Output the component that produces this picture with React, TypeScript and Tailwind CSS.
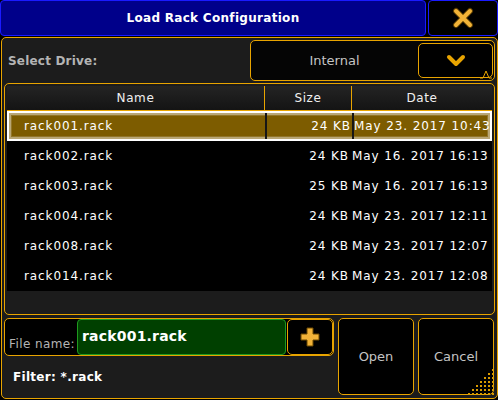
import { Fragment } from 'react';

const files = [
  { name: 'rack001.rack', size: '24 KB', date: 'May 23. 2017 10:43' },
  { name: 'rack002.rack', size: '24 KB', date: 'May 16. 2017 16:13' },
  { name: 'rack003.rack', size: '25 KB', date: 'May 16. 2017 16:13' },
  { name: 'rack004.rack', size: '24 KB', date: 'May 23. 2017 12:11' },
  { name: 'rack008.rack', size: '24 KB', date: 'May 23. 2017 12:07' },
  { name: 'rack014.rack', size: '24 KB', date: 'May 23. 2017 12:08' },
];

const ResizeGrip = () => {
  const dots = [];
  for (let r = 0; r < 7; r++) {
    for (let c = 0; c < 7; c++) {
      if (r + c >= 6) dots.push(<rect key={`${r}-${c}`} x={c * 4} y={r * 4} width="2" height="2" fill="#d99a00" />);
    }
  }
  return (
    <svg width="28" height="28" viewBox="0 0 28 28" className="absolute right-[1px] bottom-[1px]">
      {dots}
    </svg>
  );
};

export default function App() {
  return (
    <div className="w-[498px] h-[400px] bg-black flex flex-col font-['DejaVu_Sans',sans-serif] overflow-hidden">
      {/* Title bar */}
      <div className="flex h-[36px] gap-[2px]">
        <div className="flex-1 bg-[#00008a] border border-[#1a1aff] rounded-[4px] flex items-center justify-center text-white font-bold text-[12px] tracking-[0.3px]">
          Load Rack Configuration
        </div>
        <div className="w-[70px] bg-black border border-[#1a1aff] rounded-[4px] flex items-center justify-center">
          <svg width="22" height="22" viewBox="0 0 22 22">
            <path d="M4 4 L18 18 M18 4 L4 18" stroke="#5a3d00" strokeWidth="6" strokeLinecap="round" />
            <path d="M4 4 L18 18 M18 4 L4 18" stroke="#f2b338" strokeWidth="4" strokeLinecap="round" />
          </svg>
        </div>
      </div>

      {/* Main panel */}
      <div className="relative flex-1 mt-[1px] ml-[1px] mb-[1px] w-[497px] border border-[#e8a400] rounded-[5px] bg-[#1c1c1c] flex flex-col px-[2px] pt-[2px]">
        {/* Drive select */}
        <div className="flex items-center h-[41px]">
          <div className="flex-1 pl-[4px] text-[#b4b4b4] font-bold text-[12px] tracking-[0.2px]">Select Drive:</div>
          <div className="relative w-[245px] h-full border border-[#e8a400] rounded-[5px] bg-[#050505] flex items-center">
            <div className="flex-1 text-center text-[#c4c4c4] text-[13px]">Internal</div>
            <div className="w-[75px] h-[35px] mr-[1px] border border-[#e8a400] rounded-[5px] bg-black flex items-center justify-center">
              <svg width="22" height="14" viewBox="0 0 22 14">
                <path d="M4 3 L11 10 L18 3" fill="none" stroke="#e8a400" strokeWidth="4" strokeLinecap="round" strokeLinejoin="round" />
              </svg>
            </div>
            <svg width="12" height="10" viewBox="0 0 12 10" className="absolute right-[2px] bottom-[1px]">
              <path d="M0 9 L3 9 L6 2 L9 9 L12 9" fill="none" stroke="#e8a400" strokeWidth="1" />
            </svg>
          </div>
        </div>

        {/* File table */}
        <div className="mt-[2px] h-[232px] border border-[#e8a400] rounded-[5px] bg-[#1c1c1c] p-[2px] flex flex-col">
          <div className="grid grid-cols-[258px_87px_1fr] h-[25px] border-b border-[#e8a400] text-[12px] text-[#f0f0f0] tracking-[0.6px]">
            <div className="flex items-center justify-center bg-gradient-to-b from-[#242424] to-[#141414] border-r border-[#e8a400]">Name</div>
            <div className="flex items-center justify-center bg-gradient-to-b from-[#242424] to-[#141414] border-r border-[#e8a400]">Size</div>
            <div className="flex items-center justify-center bg-gradient-to-b from-[#242424] to-[#141414]">Date</div>
          </div>
          <div className="bg-black flex flex-col">
            {files.map((f, i) => (
              <Fragment key={f.name}>
                {i === 0 ? (
                  <div className="grid grid-cols-[258px_87px_1fr] h-[30px] items-stretch bg-[#7d5c00] border-2 border-white shadow-[inset_0_0_0_2px_#b9a776,inset_0_0_0_3px_#927629] text-[12px] text-white tracking-[0.9px]">
                    <div className="flex items-center pl-[15px] border-r-2 border-[#161616]">{f.name}</div>
                    <div className="flex items-center justify-end pr-[1px] border-r-2 border-[#161616]">{f.size}</div>
                    <div className="flex items-center whitespace-nowrap">{f.date}</div>
                  </div>
                ) : (
                  <div className="grid grid-cols-[258px_87px_1fr] h-[30px] items-center text-[12px] text-white tracking-[0.9px]">
                    <div className="pl-[17px]">{f.name}</div>
                    <div className="text-right pr-[3px]">{f.size}</div>
                    <div className="whitespace-nowrap">{f.date}</div>
                  </div>
                )}
              </Fragment>
            ))}
          </div>
        </div>

        {/* Bottom controls */}
        <div className="flex mt-[3px] gap-[4px]">
          <div className="w-[330px] flex flex-col">
            <div className="h-[38px] border border-[#e8a400] rounded-[5px] bg-black flex">
              <div className="w-[72px] flex items-end pl-[4px] pb-[2px] text-[#b4b4b4] text-[12px] tracking-[0.4px]">File name:</div>
              <div className="w-[209px] bg-[#004000] border border-[#1f9a1f] rounded-[4px] flex items-center pl-[4px] pb-[1px] text-white font-bold text-[14px] tracking-[0.2px]">
                rack001.rack
              </div>
              <div className="flex-1 ml-[1px] border border-[#e8a400] rounded-[5px] bg-black flex items-center justify-center">
                <svg width="22" height="22" viewBox="0 0 22 22">
                  <path d="M8 2 H14 V8 H20 V14 H14 V20 H8 V14 H2 V8 H8 Z" fill="#f2b338" stroke="#6a4800" strokeWidth="1" strokeLinejoin="round" />
                </svg>
              </div>
            </div>
            <div className="flex-1 flex items-center pl-[9px] pt-[3px] text-white font-bold text-[12px] tracking-[0.3px]">Filter: *.rack</div>
          </div>
          <div className="w-[76px] h-[77px] border border-[#e8a400] rounded-[5px] bg-black flex items-center justify-center text-[#c4c4c4] text-[13px]">
            Open
          </div>
          <div className="w-[76px] h-[77px] border border-[#e8a400] rounded-[5px] bg-black flex items-center justify-center text-[#c4c4c4] text-[13px]">
            Cancel
          </div>
        </div>

        <ResizeGrip />
      </div>
    </div>
  );
}
